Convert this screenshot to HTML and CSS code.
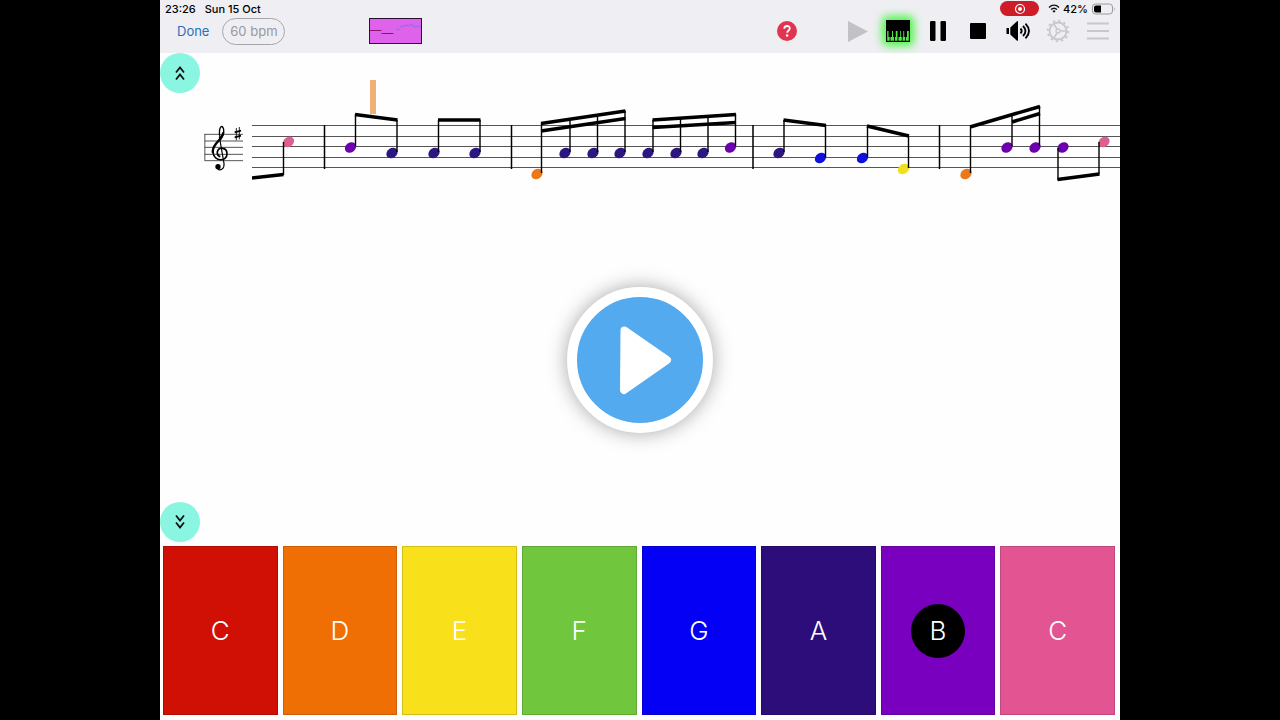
FILE: index.html
```html
<!DOCTYPE html>
<html lang="en">
<head>
  <meta charset="UTF-8">
  <meta name="viewport" content="width=device-width, initial-scale=1.0">
  <title>Music Player</title>
  <link rel="stylesheet" href="styles.css">
</head>
<body>
  <main class="screen">
    <header>
      <div class="status">
        <span>23:26</span>
        <span>Sun 15 Oct</span>
        <span class="recording">
          <svg width="12" height="12" viewBox="0 0 12 12"><circle cx="6" cy="6" r="4.5" fill="none" stroke="#fff" stroke-width="1.2"/><circle cx="6" cy="6" r="2" fill="#fff"/></svg>
        </span>
        <svg class="wifi" width="12" height="9" viewBox="0 0 12 9" fill="none" stroke="#111" stroke-width="1.4"><path d="M1 3.400C4 .6 8 .6 11 3.400M3 5.500C4.800 3.900 7.200 3.900 9 5.500"/><path d="M4.400 6.900Q6 5.700 7.600 6.900L6 8.800z" fill="#111" stroke="none"/></svg>
        <span>42%</span>
        <svg class="battery" width="24" height="12" viewBox="0 0 24 12"><rect x=".5" y="1" width="20" height="10" rx="3" fill="none" stroke="#999"/><path d="M4 2.500h5v7H4a2 2 0 0 1-2-2v-3a2 2 0 0 1 2-2z" fill="#000"/><path d="M22 4.200q1.600 1.800 0 3.600z" fill="#999"/></svg>
      </div>
      <nav class="toolbar">
        <a href="#done" class="done">Done</a>
        <button class="tempo">60 bpm</button>
        <button class="overview" aria-label="Overview">
          <svg width="53" height="26" viewBox="0 0 53 26"><rect x=".5" y=".5" width="52" height="25" fill="#df63ea" stroke="#281031"/><g fill="none"><path d="M1 12.500h11.500M12.500 15.500h12" stroke="#8d126f" stroke-width="1.200"/><path d="M27 11.500h4M31 8.500h4M35 7.500h6M41 6.500h3M43 8.500h9" stroke="#a269e8" stroke-width="1.300"/></g></svg>
        </button>
        <div class="tools">
          <button class="tool help" aria-label="Help">
            <svg width="20" height="20" viewBox="0 0 20 20"><circle cx="10" cy="10" r="10" fill="#e03550"/><path d="M7.300 7.700c0-3.700 5.700-3.500 5.500-.2-.1 2-2.600 2-2.600 4.200" fill="none" stroke="#fff" stroke-width="1.800"/><circle cx="10.100" cy="14.500" r="1.200" fill="#fff"/></svg>
          </button>
          <button class="tool" aria-label="Play">
            <svg width="20" height="21" viewBox="0 0 20 21"><path d="M0 0l20 10.500L0 21z" fill="#c2c2c5"/></svg>
          </button>
          <button class="tool" aria-label="Keyboard">
            <svg class="glow" width="24" height="22" viewBox="0 0 24 22"><rect width="24" height="22"/><path d="M1.200 11h1.300v6h1.200v3.800H1.200zM6 11h1v6h1v3.800H4.500V17H6zM9.800 11h1.700v9.800H9v-3.800h.8zM14 11h.8v6h1v3.800h-3.300v-3.800H14zM17.300 11h.9v6h.9v3.800h-2.500v-3.800h.7zM21 11h1.800v9.800h-2.900v-3.800H21z" fill="#4ee844"/></svg>
          </button>
          <button class="tool" aria-label="Pause">
            <svg width="16" height="20" viewBox="0 0 16 20"><rect width="5.500" height="20" rx="1.200"/><rect x="10.500" width="5.500" height="20" rx="1.200"/></svg>
          </button>
          <button class="tool" aria-label="Stop">
            <svg width="16" height="16" viewBox="0 0 16 16"><rect width="16" height="16" rx="1"/></svg>
          </button>
          <button class="tool" aria-label="Volume">
            <svg width="24" height="20" viewBox="0 0 24 20"><path d="M.5 7H3v6H.5zM4.300 6.500L11 .3q1-.6 1 .5v18.400q0 1-1 .5l-6.700-6.200z"/><path d="M14.500 7.500q2.500 2.500 0 5M17 5q5 5 0 10M19.500 2.600q7 7.400 0 14.800" fill="none" stroke="#000" stroke-width="1.800"/></svg>
          </button>
          <button class="tool" aria-label="Settings">
            <svg width="24" height="24" viewBox="0 0 24 24" fill="none" stroke="#c8c8cb"><circle cx="12" cy="12" r="10.300" stroke-width="2" stroke-dasharray="2.200 3.190"/><circle cx="12" cy="12" r="8.500" stroke-width="1.800"/><circle cx="12" cy="12" r="2" stroke-width="1.300"/><path d="M14 12h6.500M11 10.200L7.800 4.600M11 13.800l-3.200 5.600" stroke-width="1.600"/></svg>
          </button>
          <button class="tool" aria-label="Menu">
            <svg width="22" height="18" viewBox="0 0 22 18"><path d="M0 1.500h22M0 9h22M0 16.500h22" stroke="#c8c8cb" stroke-width="1.800"/></svg>
          </button>
        </div>
      </nav>
    </header>

    <section class="stage">
      <div class="rail">
        <button class="round" aria-label="Octave up">
          <svg width="12" height="16" viewBox="0 0 12 16"><path d="M2 7.500l4-5 4 5M2 14.500l4-5 4 5"/></svg>
        </button>
        <button class="round" aria-label="Octave down">
          <svg width="12" height="16" viewBox="0 0 12 16"><path d="M2 1.500l4 5 4-5M2 8.500l4 5 4-5"/></svg>
        </button>
      </div>
      <div class="score">
        <svg class="clef" width="40" height="48" viewBox="42 162 120 144" fill="none" stroke="#000">
          <path d="M44.500 192v80M44 193h115M44 213h115M44 232h115M44 253h115M44 272h115" stroke="#333" stroke-width="2.500"/>
          <path d="M92 208C83 184 91 169 96 169C104 176 103 195 91 210" stroke-width="4"/>
          <path d="M100 187C99 200 86 212 78 221C71 230 66 238 69 249" stroke-width="7"/>
          <path d="M69 247C73 276 111 276 111 251C111 231 85 230 82 246C81 254 85 258 91 260" stroke-width="5"/>
          <path d="M88 200L102 280C104 298 91 302 83 298" stroke-width="3.500"/>
          <circle cx="84" cy="290" r="8" fill="#000" stroke="none"/>
          <path d="M139 174v37M148 171v37" stroke-width="2.500"/>
          <path d="M134 187l19-5M134 202l19-5" stroke-width="5"/>
        </svg>
        <svg class="staff" height="110">
          <defs>
            <ellipse id="note" rx="6" ry="4.800" transform="rotate(-35)"/>
          </defs>
          <path class="line" d="M0 50.500h2000M0 61.500h2000M0 71.500h2000M0 82.500h2000M0 92.500h2000"/>
          <path class="bar" d="M72.500 50v44M259.500 50v44M501 50v44M687.500 50v44"/>
          <!-- playback cursor -->
          <rect x="118" y="5" width="6" height="34" fill="#efb274"/>

          <g fill="#dd5f91"><use href="#note" x="36.500" y="67"/><use href="#note" x="852" y="67"/></g>
          <g fill="#6d00ae"><use href="#note" x="98.500" y="72.500"/><use href="#note" x="478.500" y="72.500"/><use href="#note" x="755" y="72.500"/><use href="#note" x="783" y="72.500"/><use href="#note" x="811" y="72.500"/></g>
          <g fill="#2c1680"><use href="#note" x="140" y="78"/><use href="#note" x="182" y="78"/><use href="#note" x="223" y="78"/><use href="#note" x="313" y="78"/><use href="#note" x="341" y="78"/><use href="#note" x="368" y="78"/><use href="#note" x="396" y="78"/><use href="#note" x="424" y="78"/><use href="#note" x="451" y="78"/><use href="#note" x="527" y="78"/></g>
          <g fill="#1010dc"><use href="#note" x="568.500" y="83"/><use href="#note" x="610.500" y="83"/></g>
          <use href="#note" x="651.500" y="94" fill="#f0e020"/>
          <g fill="#ec7818"><use href="#note" x="285" y="99"/><use href="#note" x="714" y="99"/></g>

          <path class="stem" d="M31.500 67v33M103.500 71V39M145 77V45M186.500 77V45M228 77V45M289.500 98V48M318 77V45M345.500 77V41M373 77V36M401 77V45M428.500 77V43M456 77V42M483.500 71V39M532 77V45M573.500 82V50M615.500 82V51M656.500 93V61M718.500 98V52M760 71V39M787.500 71V31M806 73v32M847 67v32"/>
          <path class="beam" d="M0 103l31.500-3.500M103 39.500l42.500 5.500M186 45h42.500M289 48.500L373.500 36M289 56l84.500-12.500M400.500 45l83.500-5.500M400.500 52.500l83.500-5M531.500 45l42.500 5.500M615 51l42 10M718 52l70-20.500M760 47l28-8.500M805.500 104.500l42-5.500"/>
        </svg>
      </div>
    </section>

    <section class="keyboard">
      <button class="key c"><span>C</span></button>
      <button class="key d"><span>D</span></button>
      <button class="key e"><span>E</span></button>
      <button class="key f"><span>F</span></button>
      <button class="key g"><span>G</span></button>
      <button class="key a"><span>A</span></button>
      <button class="key b active"><span>B</span></button>
      <button class="key high-c"><span>C</span></button>
    </section>

    <button class="play-video" aria-label="Play video">
      <svg width="60" height="76" viewBox="0 0 60 76"><path d="M14.500 8.500L57 38 14 68z" fill="#fff" stroke="#fff" stroke-width="8" stroke-linejoin="round"/></svg>
    </button>
  </main>
</body>
</html>
```
FILE: styles.css
```css
* {
  box-sizing: border-box;
}
body {
  margin: 0;
  background-color: #000;
  font-family: Inter, "Liberation Sans", sans-serif;
}
button {
  border: none;
  padding: 0;
  background: none;
  font-family: inherit;
  cursor: pointer;
}
svg {
  display: block;
  flex-shrink: 0;
  overflow: visible;
}
.screen {
  position: relative;
  display: flex;
  flex-direction: column;
  width: 75%;
  min-height: 100vh;
  margin: 0 auto;
  background-color: #fefefe;
}
header {
  background-color: #efeef3;
}
.status {
  display: flex;
  align-items: center;
  gap: 9px;
  height: 17px;
  padding: 0 5px;
  font-size: 11px;
  font-weight: 500;
  color: #000;
}
.recording {
  display: flex;
  align-items: center;
  justify-content: center;
  width: 39px;
  height: 15px;
  margin-left: auto;
  border-radius: 8px;
  background-color: #ce1c28;
}
.wifi {
  margin-right: -6px;
}
.battery {
  margin-left: -5px;
  margin-right: -1px;
}
.toolbar {
  display: flex;
  align-items: center;
  height: 36px;
  padding: 0 2px 8px 17px;
}
.done {
  color: #2b6fb8;
  font-size: 13px;
  text-decoration: none;
}
.tempo {
  width: 63px;
  height: 27px;
  margin-left: 13px;
  border: 1px solid #a5a5aa;
  border-radius: 14px;
  color: #98989d;
  font-size: 13px;
}
.overview {
  margin-left: 84px;
}
.tools {
  display: flex;
  margin-left: auto;
}
.tool {
  display: flex;
  align-items: center;
  justify-content: center;
  width: 40px;
  height: 28px;
}
.help {
  margin-right: 31px;
}
.glow {
  border-radius: 2px;
  box-shadow: 0 0 8px 4px #4df548;
}
.stage {
  display: flex;
  flex: 1;
}
.rail {
  display: flex;
  flex-direction: column;
  justify-content: space-between;
}
.round {
  display: flex;
  align-items: center;
  justify-content: center;
  width: 40px;
  height: 40px;
  border-radius: 50%;
  background-color: #8af5e1;
}
.round path {
  fill: none;
  stroke: #111;
  stroke-width: 1.8;
}
.score {
  display: flex;
  flex: 1;
  align-items: flex-start;
  gap: 8px;
  min-width: 0;
  padding: 22px 0 0 4px;
}
.clef {
  margin-top: 49px;
  margin-bottom: 13px;
}
.staff {
  flex: 1;
  min-width: 0;
  overflow: hidden;
}
.line {
  stroke: #555;
}
.bar {
  stroke: #000;
  stroke-width: 1.5;
}
.stem {
  stroke: #000;
  stroke-width: 1.4;
}
.beam {
  stroke: #000;
  stroke-width: 3.5;
}
.keyboard {
  display: flex;
  gap: 5px;
  padding: 4px 5px 5px 3px;
}
.key {
  display: flex;
  flex: 1;
  align-items: center;
  justify-content: center;
  height: 169px;
  border: 1px solid rgba(0, 0, 0, 0.15);
  color: #fff;
  font-size: 26px;
  font-weight: 300;
}
.key span {
  width: 54px;
  border-radius: 50%;
  line-height: 54px;
}
.active span {
  background-color: #000;
}
.c { background-color: #d00f05; }
.d { background-color: #f06f04; }
.e { background-color: #f8e11a; }
.f { background-color: #70c73e; }
.g { background-color: #0400f5; }
.a { background-color: #2c0d7a; }
.b { background-color: #7900bf; }
.high-c { background-color: #e25592; }
.play-video {
  position: absolute;
  top: 50%;
  left: 50%;
  display: flex;
  align-items: center;
  justify-content: center;
  width: 146px;
  height: 146px;
  border: 10px solid #fff;
  border-radius: 50%;
  background-color: #54aaee;
  box-shadow: 0 0 20px rgba(0, 0, 0, 0.35);
  transform: translate(-50%, -50%);
}
```
